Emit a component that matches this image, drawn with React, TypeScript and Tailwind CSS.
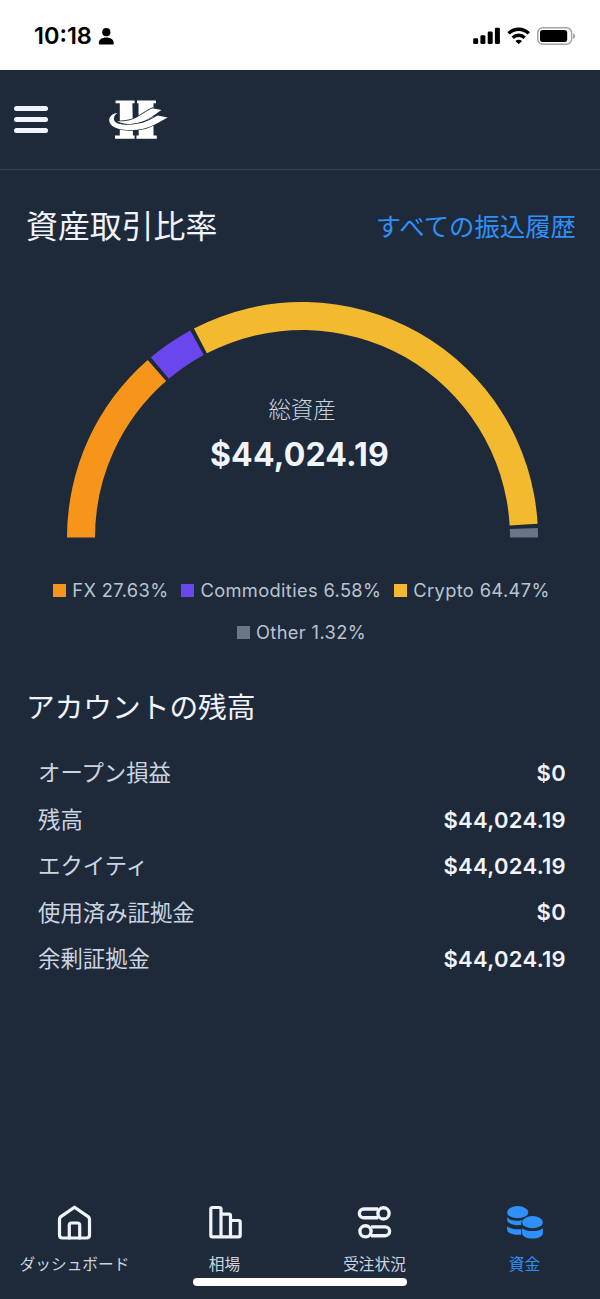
import type { ReactNode } from 'react';

const segments = [
  { name: 'FX', value: 27.63, fill: '#f7941a' },
  { name: 'Commodities', value: 6.58, fill: '#6a47ed' },
  { name: 'Crypto', value: 64.47, fill: '#f4ba2f' },
  { name: 'Other', value: 1.32, fill: '#6a7587' },
];

const balances = [
  ['オープン損益', '$0'],
  ['残高', '$44,024.19'],
  ['エクイティ', '$44,024.19'],
  ['使用済み証拠金', '$0'],
  ['余剰証拠金', '$44,024.19'],
];

const CX = 235.5;
const CY = 235.5;
const OUTER = 235.5;
const INNER = 207.5;
const GAP = 1;

function point(radius: number, degrees: number) {
  const a = (degrees * Math.PI) / 180;
  return `${(CX - radius * Math.cos(a)).toFixed(2)} ${(CY - radius * Math.sin(a)).toFixed(2)}`;
}

function Gauge() {
  const available = 180 - GAP * (segments.length - 1);
  let start = 0;
  return (
    <svg width="471" height="236" viewBox="0 0 471 236" className="block">
      {segments.map((s) => {
        const from = start;
        const to = from + (s.value / 100) * available;
        start = to + GAP;
        return (
          <path
            key={s.name}
            fill={s.fill}
            d={`M${point(OUTER, from)}A${OUTER} ${OUTER} 0 0 1 ${point(OUTER, to)}L${point(INNER, to)}A${INNER} ${INNER} 0 0 0 ${point(INNER, from)}Z`}
          />
        );
      })}
    </svg>
  );
}

function StatusBar() {
  return (
    <div className="flex h-[70px] shrink-0 items-center bg-white pl-[34px] pr-[24px] pt-[2px] text-black">
      <span className="text-[23.5px] font-semibold leading-none">10:18</span>
      <svg width="17" height="17" viewBox="0 0 16 17" className="ml-[6px]" fill="currentColor">
        <circle cx="7.8" cy="4.2" r="4.1" />
        <path d="M0.3 15.2C0.3 11.6 3.5 9.5 7.8 9.5s7.5 2.1 7.5 5.7c0 .8-.5 1.3-1.2 1.3H1.5c-.7 0-1.2-.5-1.2-1.3Z" />
      </svg>
      <div className="ml-auto flex items-center">
        <svg width="28" height="18" viewBox="0 0 28 18" fill="currentColor">
          <rect x="0.2" y="11.3" width="5" height="5.7" rx="1.3" />
          <rect x="7.4" y="8.2" width="5" height="8.8" rx="1.3" />
          <rect x="14.7" y="4.6" width="5" height="12.4" rx="1.3" />
          <rect x="21.9" y="0.7" width="5" height="16.3" rx="1.3" />
        </svg>
        <svg width="24" height="18" viewBox="0 0 24 18" className="ml-[6px]" fill="none" stroke="currentColor" strokeWidth="3.4">
          <path d="M1.6 6.4C7.3.8 16.1.8 21.8 6.4" />
          <path d="M5.7 10.7c3.4-3.2 8.6-3.2 12 0" />
          <path d="M8.4 13.9c1.9-1.7 4.700-1.700 6.600 0L11.700 17.300Z" fill="currentColor" stroke="none" />
        </svg>
        <svg width="39" height="20" viewBox="0 0 39 20" className="ml-[6px]">
          <rect x="0.8" y="1.7" width="33.8" height="16.6" rx="5" fill="none" stroke="#a3a3a3" strokeWidth="1.5" />
          <rect x="3" y="4" width="27.2" height="12.1" rx="2.8" fill="#000" />
          <path d="M36 7.2c2.7.8 2.7 5 0 5.8Z" fill="#a3a3a3" />
        </svg>
      </div>
    </div>
  );
}

function Logo() {
  return (
    <svg width="60" height="40" viewBox="0 0 60 40" className="ml-[61px]">
      <path
        fill="#fff"
        d="M6.6.6H25.600v2.700h-2.200l.6 32.200h1.600v3.200H6v-3.200h4.800V3.300H6.600ZM28 .6H47v2.700h-2.500v32.200h3.300v3.200H27.400v-3.200h2.300l-.2-32.200H28Z"
      />
      <path
        fill="#fff"
        stroke="#1e2a3a"
        strokeWidth="1.6"
        paintOrder="stroke"
        d="M8 21c4.500.6 9.600.2 14-1.200C30 17.300 35 12 43.300 8.200l9.200 1.800c-7.500 5-12.500 9.500-20 12-8.500 2.700-18 2.900-24.500-1Z"
      />
      <path
        fill="#fff"
        stroke="#1e2a3a"
        strokeWidth="1.3"
        paintOrder="stroke"
        d="M8.700 12.700C2.500 13.500-.3 17.600.3 21.300c1.400 8.700 20 10.600 34.700 7.300C43 26.600 49.500 22.500 58.800 17.500l-10.300-2.100c-7 4.500-12.500 7-20 8.400-8.500 1.500-18.700 1.400-22-1.800C3.700 19.200 4.800 15 8.700 12.700Z"
      />
    </svg>
  );
}

function HomeIcon() {
  return (
    <svg width="36" height="36" viewBox="0 0 36 36" fill="none" stroke="#f1f4fc" strokeWidth="3.2" strokeLinejoin="round" strokeLinecap="round">
      <path d="M2.5 14.5c0-1.300.4-2.100 1.400-2.900L17.500 2.200l13.600 9.400c1 .8 1.400 1.600 1.400 2.900v15.500c0 1.900-1.100 3-3 3h-24c-1.900 0-3-1.100-3-3Z" />
      <path d="M12.3 33V20.200c0-1.400.8-2.200 2.200-2.200h6c1.400 0 2.200.8 2.200 2.200V33" />
    </svg>
  );
}

function MarketIcon() {
  return (
    <svg width="36" height="36" viewBox="0 0 36 36" fill="none" stroke="#f1f4fc" strokeWidth="3.2" strokeLinejoin="round">
      <path d="M14 31.900V4.200c0-1.200-.5-1.700-1.700-1.700H5.500c-1.200 0-1.700.5-1.700 1.700v26c0 1.200.5 1.700 1.700 1.700h26c1.200 0 1.700-.5 1.700-1.700V17.200c0-1.200-.5-1.700-1.700-1.700H24" />
      <path d="M14 9.100h7.800c1.200 0 1.700.5 1.700 1.700v21.100" />
    </svg>
  );
}

function OrdersIcon() {
  return (
    <svg width="36" height="36" viewBox="0 0 36 36" fill="none" stroke="#f1f4fc" strokeWidth="3.4">
      <path d="M21 4H6.800a4.400 4.400 0 0 0 0 8.800H21" />
      <circle cx="26.500" cy="8.400" r="5.600" />
      <path d="M14 21.900h14.200a4.400 4.400 0 0 1 0 8.800H14" />
      <circle cx="8.500" cy="26.300" r="5.600" />
    </svg>
  );
}

function FundsIcon() {
  return (
    <svg width="38" height="36" viewBox="0 0 38 36" fill="#2e90fa">
      <ellipse cx="11.700" cy="7.200" rx="10.600" ry="6.100" />
      <path d="M1.100 12.300c2.100 2.600 6.200 3.500 10.600 3.400 2.300 0 3.600-.2 5.200-.7-1.200 1.300-1.700 2.300-1.700 3.800v1.200c-7.200.8-14.100-1.400-14.100-5.300Z" />
      <path d="M1.100 21.200c2.800 2.700 8.300 3.500 14.100 3v5.500C8 30.500 1.100 28.300 1.100 24.400Z" />
      <ellipse cx="26.500" cy="17.200" rx="10.400" ry="6.100" />
      <path d="M16.100 23.200c2.400 2.100 6 2.900 10.400 2.900s8.100-.8 10.400-2.900v4.900c0 3.500-4.500 5.500-10.400 5.500s-10.400-2-10.400-5.500Z" />
    </svg>
  );
}

function Tab({ icon, label, active = false }: { icon: ReactNode; label: string; active?: boolean }) {
  return (
    <div className="flex w-[150px] flex-col items-center">
      {icon}
      <span className={`mt-[12px] pr-px text-[15.7px] leading-6 whitespace-nowrap ${active ? 'text-[#2e90fa]' : 'text-[#ccd4e0]'}`}>
        {label}
      </span>
    </div>
  );
}

export default function App() {
  return (
    <div lang="ja" className="flex h-[1299px] w-[600px] flex-col overflow-hidden bg-[#1e2a3a] font-[Inter,'Noto_Sans_CJK_JP',sans-serif] text-[#f1f4fc]">
      <StatusBar />
      <header className="flex h-[100px] shrink-0 items-center border-b border-[#344152] pl-[14px]">
        <div className="flex w-[34px] flex-col gap-[6px]">
          <div className="h-[5px] rounded-full bg-[#f1f4fc]" />
          <div className="h-[5px] rounded-full bg-[#f1f4fc]" />
          <div className="h-[5px] rounded-full bg-[#f1f4fc]" />
        </div>
        <Logo />
      </header>

      <main className="flex flex-1 flex-col">
        <div className="flex items-center justify-between pl-[26px] pr-[24px] pt-[35px]">
          <h1 className="text-[31.9px] leading-[44px] whitespace-nowrap">資産取引比率</h1>
          <a className="text-[25.4px] leading-[44px] whitespace-nowrap text-[#2e90fa]">すべての振込履歴</a>
        </div>

        <div className="mt-[53px] grid pl-[67px]">
          <div className="col-start-1 row-start-1">
            <Gauge />
          </div>
          <div className="col-start-1 row-start-1 flex w-[465px] flex-col items-center pt-[92px]">
            <span className="pl-[5px] text-[22.4px] font-light leading-8 text-[#ccd4e0]">総資産</span>
            <span className="mt-[8px] text-[32px] font-bold leading-[42px] tracking-[0.2px]">$44,024.19</span>
          </div>
        </div>

        <div className="mt-[32px] flex flex-wrap justify-center gap-x-[13px] pl-[43px] pr-[40px] text-[18.3px] leading-[41.5px] tracking-[0.35px] text-[#bac3d0]">
          {segments.map((s) => (
            <div key={s.name} className="flex items-center gap-[6px] whitespace-nowrap">
              <svg width="13" height="13">
                <rect width="13" height="13" fill={s.fill} />
              </svg>
              <span>
                {s.name} {s.value}%
              </span>
            </div>
          ))}
        </div>

        <h2 className="mt-[35px] pl-[26px] text-[28.7px] leading-[40px]">アカウントの残高</h2>
        <dl className="mt-[22px] pl-[38px] pr-[34px]">
          {balances.map(([label, amount]) => (
            <div key={label} className="flex h-[46.4px] items-center justify-between">
              <dt className="text-[22.4px] text-[#ccd4e0]">{label}</dt>
              <dd className="pt-px text-[22px] font-semibold tracking-[0.3px]">{amount}</dd>
            </div>
          ))}
        </dl>
      </main>

      <nav className="flex h-[72px] shrink-0">
        <Tab icon={<HomeIcon />} label="ダッシュボード" />
        <Tab icon={<MarketIcon />} label="相場" />
        <Tab icon={<OrdersIcon />} label="受注状況" />
        <Tab icon={<FundsIcon />} label="資金" active />
      </nav>
      <div className="flex h-[22px] shrink-0 justify-center">
        <div className="mt-[1px] h-[8px] w-[214px] rounded-full bg-white" />
      </div>
    </div>
  );
}
